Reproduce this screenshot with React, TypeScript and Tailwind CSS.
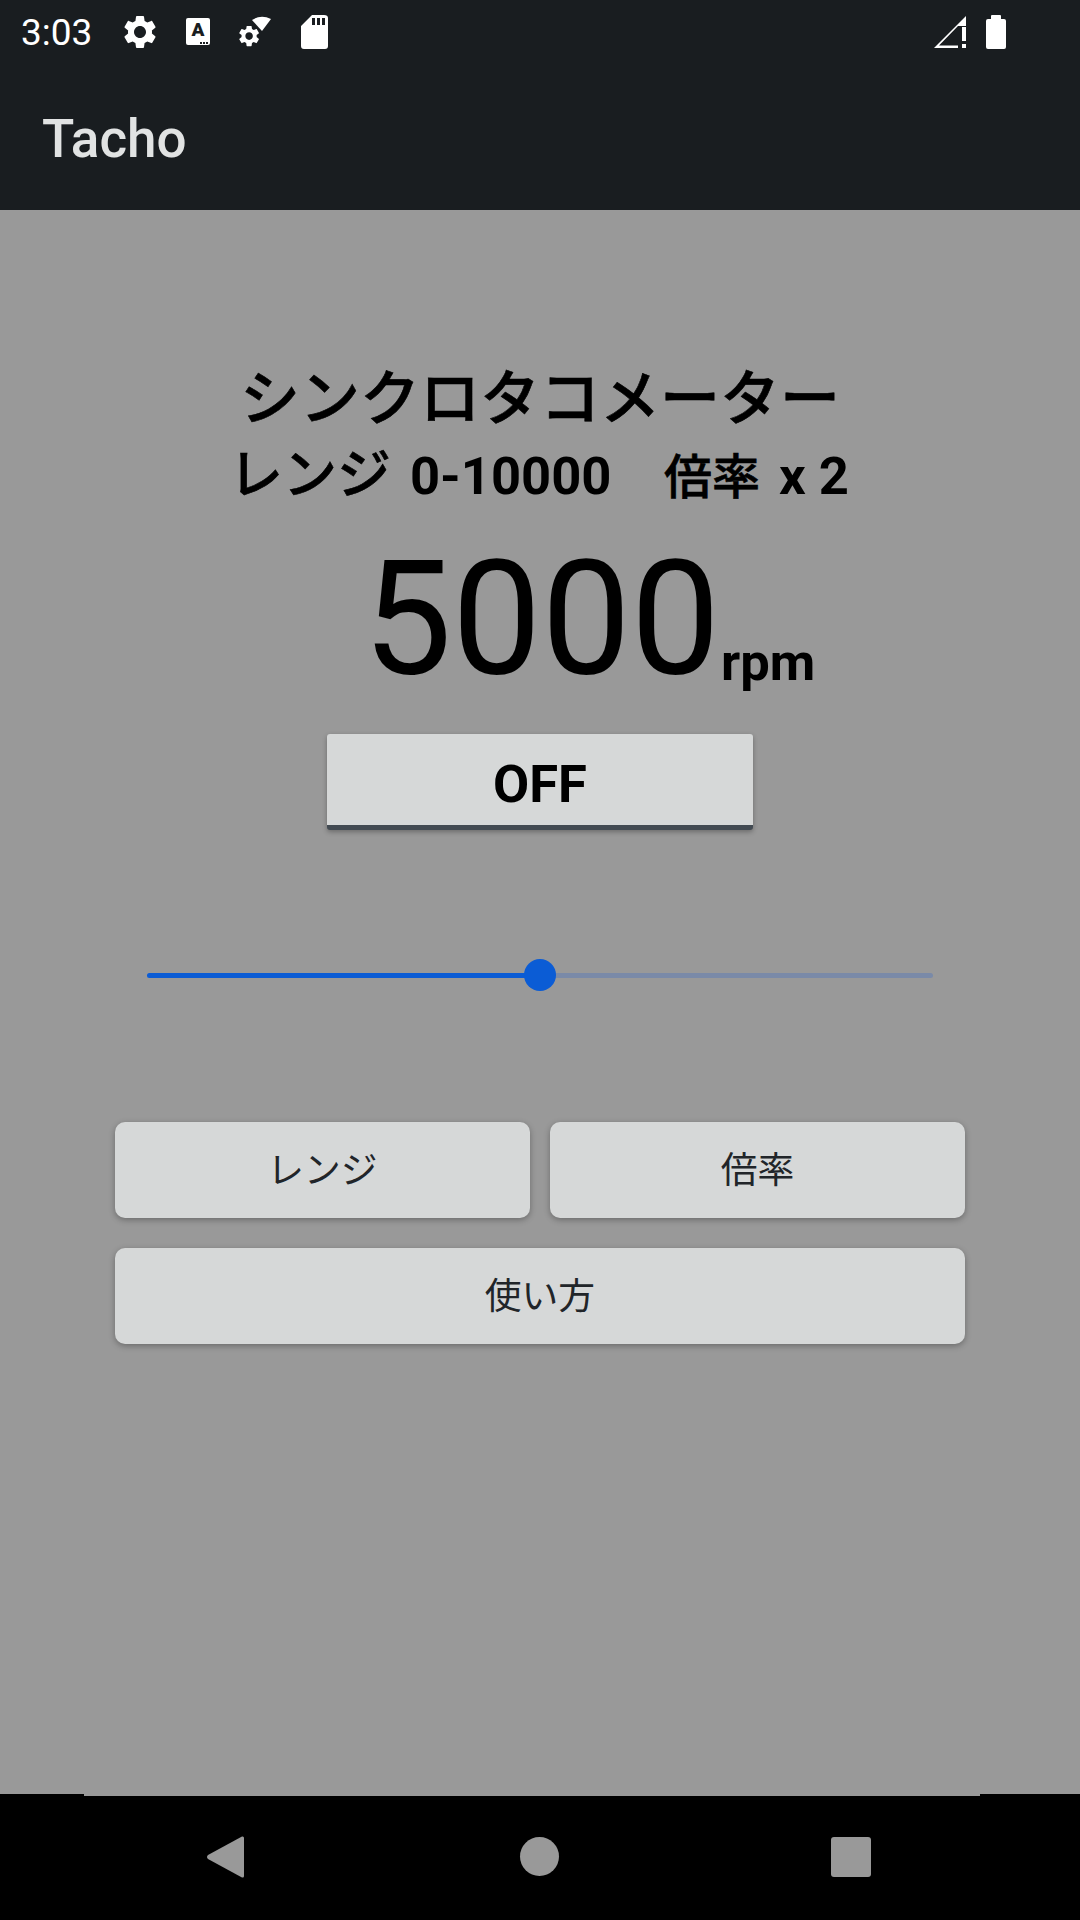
import React from "react";

const roboto = "font-['Roboto','Noto_Sans_CJK_JP',sans-serif]";

function StatusIcons() {
  return (
    <div className="flex items-center">
      <svg className="ml-[24px]" width="40" height="40" viewBox="0 0 24 24" fill="#fff">
        <path d="M19.14 12.94c.04-.3.06-.61.06-.94 0-.32-.02-.64-.07-.94l2.03-1.58c.18-.14.23-.41.12-.61l-1.92-3.32c-.12-.22-.37-.29-.59-.22l-2.39.96c-.5-.38-1.03-.7-1.62-.94l-.36-2.54c-.04-.24-.24-.41-.48-.41h-3.84c-.24 0-.43.17-.47.41l-.36 2.54c-.59.24-1.13.57-1.62.94l-2.39-.96c-.22-.08-.47 0-.59.22L2.74 8.87c-.12.21-.08.47.12.61l2.03 1.58c-.05.3-.09.63-.09.94s.02.64.07.94l-2.03 1.58c-.18.14-.23.41-.12.61l1.92 3.32c.12.22.37.29.59.22l2.39-.96c.5.38 1.03.7 1.62.94l.36 2.54c.05.24.24.41.48.41h3.84c.24 0 .44-.17.47-.41l.36-2.54c.59-.24 1.13-.56 1.62-.94l2.39.96c.22.08.47 0 .59-.22l1.92-3.32c.12-.22.07-.47-.12-.61l-2.01-1.58zM12 15.6c-1.98 0-3.6-1.62-3.6-3.6s1.62-3.6 3.6-3.6 3.6 1.62 3.6 3.6-1.62 3.6-3.6 3.6z" />
      </svg>
      <div className="relative ml-[26px] flex h-[27px] w-[24px] items-start justify-center rounded-[2px] bg-white">
        <span className="font-['Roboto',sans-serif] text-[19px] leading-[23px] font-black text-[#191d20]">A</span>
        <span className="absolute right-[2px] bottom-[1px] flex gap-[1px]">
          <i className="h-[2px] w-[2px] bg-[#191d20]" />
          <i className="h-[2px] w-[2px] bg-[#191d20]" />
          <i className="h-[2px] w-[2px] bg-[#191d20]" />
        </span>
      </div>
      <svg className="ml-[28px]" width="36" height="34" viewBox="0 0 36 34">
        <path d="M14 5 Q23 -1 33 4 L24 16 Z" fill="#fff" />
        <path
          transform="translate(-1.5 8.5) scale(1.05)"
          fill="#fff"
          d="M19.14 12.94c.04-.3.06-.61.06-.94 0-.32-.02-.64-.07-.94l2.03-1.58c.18-.14.23-.41.12-.61l-1.92-3.32c-.12-.22-.37-.29-.59-.22l-2.39.96c-.5-.38-1.03-.7-1.62-.94l-.36-2.54c-.04-.24-.24-.41-.48-.41h-3.84c-.24 0-.43.17-.47.41l-.36 2.54c-.59.24-1.13.57-1.62.94l-2.39-.96c-.22-.08-.47 0-.59.22L2.74 8.87c-.12.21-.08.47.12.61l2.03 1.58c-.05.3-.09.63-.09.94s.02.64.07.94l-2.03 1.58c-.18.14-.23.41-.12.61l1.92 3.32c.12.22.37.29.59.22l2.39-.96c.5.38 1.03.7 1.62.94l.36 2.54c.05.24.24.41.48.41h3.84c.24 0 .44-.17.47-.41l.36-2.54c.59-.24 1.13-.56 1.62-.94l2.39.96c.22.08.47 0 .59-.22l1.92-3.32c.12-.22.07-.47-.12-.61l-2.01-1.58zM12 15.6c-1.98 0-3.6-1.62-3.6-3.6s1.62-3.6 3.6-3.6 3.6 1.62 3.6 3.6-1.62 3.6-3.6 3.6z"
        />
      </svg>
      <svg className="ml-[27px]" width="27" height="34" viewBox="0 0 27 34">
        <path
          fillRule="evenodd"
          fill="#fff"
          d="M11 0 H23 Q27 0 27 3 V31 Q27 34 24 34 H3 Q0 34 0 31 V11 Z M11 3 V10 H14 V3 Z M16 3 V10 H19 V3 Z M21 3 V10 H24 V3 Z"
        />
      </svg>
    </div>
  );
}

function RightIcons() {
  return (
    <div className="flex items-center">
      <svg width="33" height="34" viewBox="0 0 33 34">
        <path fillRule="evenodd" fill="#fff" d="M0 33 L32 1 V11 H24 L5 30.5 H24 V33 Z" />
        <path fill="#fff" d="M28 12 H32 V26 H28 Z M28 29 H32 V33 H28 Z" />
      </svg>
      <div className="ml-[19px] flex flex-col items-center">
        <div className="h-[4px] w-[10px] rounded-t-[1px] bg-white" />
        <div className="h-[30px] w-[20px] rounded-[2px] bg-white" />
      </div>
    </div>
  );
}

function RaisedButton({ label, className }: { label: string; className: string }) {
  return (
    <button
      className={`flex h-[96px] items-center justify-center rounded-[10px] bg-[#d6d8d8] pt-[1px] text-[36.75px] text-[#212529] shadow-[0_2px_6px_rgba(0,0,0,0.3)] ${className}`}
    >
      {label}
    </button>
  );
}

export default function App() {
  return (
    <div className={`flex h-[1920px] w-[1080px] flex-col overflow-hidden bg-[#999999] ${roboto}`}>
      <header className="h-[210px] bg-[#191d20]">
        <div className="flex h-[63px] items-center pr-[74px] pl-[21px]">
          <span className="w-[75px] pt-[2px] text-[37px] leading-none text-white">3:03</span>
          <StatusIcons />
          <div className="flex-1" />
          <RightIcons />
        </div>
        <div className="flex h-[147px] items-center pt-[5px] pl-[42px]">
          <span className="text-[53px] leading-none font-medium text-[#e1e3e3]">Tacho</span>
        </div>
      </header>

      <main className="flex flex-1 flex-col items-center pt-[152px]">
        <h1 className="text-[60px] leading-[76px] font-medium text-black [-webkit-text-stroke:0.6px_#000]">シンクロタコメーター</h1>
        <p className="flex h-[74px] w-[622px] items-baseline pt-[2px] whitespace-nowrap text-black">
          <span className="w-[181px] shrink-0 text-[54px] leading-[72px] font-medium [-webkit-text-stroke:0.6px_#000]">レンジ</span>
          <span className="w-[254px] shrink-0 text-[52.5px] leading-[72px] font-bold">0-10000</span>
          <span className="w-[115px] shrink-0 text-[48px] leading-[72px] font-medium [-webkit-text-stroke:0.6px_#000]">倍率</span>
          <span className="shrink-0 text-[52.5px] leading-[72px] font-bold">x 2</span>
        </p>
        <div className="mt-[12px] flex items-baseline pl-[98px] text-black">
          <span className="text-[159px] leading-[190px]">5000</span>
          <span className="ml-[1px] translate-y-[7px] text-[52.5px] leading-none font-bold">rpm</span>
        </div>
        <button className="mt-[20px] flex h-[96px] w-[426px] items-center justify-center rounded-[3px] border-b-[5px] border-[#424a52] bg-[#d6d8d8] pt-[9px] text-[52.5px] font-bold text-black shadow-[0_2px_5px_rgba(0,0,0,0.3)]">
          OFF
        </button>

        <div className="relative mt-[129px] h-[32px] w-[786px]">
          <div className="absolute top-[13.5px] left-0 h-[5px] w-full rounded-full bg-[#7a8aa8]" />
          <div className="absolute top-[13.5px] left-0 h-[5px] w-1/2 rounded-l-full bg-[#0b5cd5]" />
          <div className="absolute top-0 left-[377px] h-[32px] w-[32px] rounded-full bg-[#0b5cd5]" />
        </div>

        <div className="mt-[131px] flex w-[850px] flex-wrap gap-x-[20px] gap-y-[30px]">
          <RaisedButton label="レンジ" className="w-[415px]" />
          <RaisedButton label="倍率" className="w-[415px]" />
          <RaisedButton label="使い方" className="w-full" />
        </div>
      </main>

      <nav className="h-[126px] bg-black">
        <div className="mr-[100px] ml-[84px] h-[2px] bg-[#999999]" />
        <div className="relative h-[124px]">
          <svg className="absolute top-[40px] left-[207px]" width="37" height="42" viewBox="0 0 37 42" fill="#999999">
            <path d="M35 0.5 Q37 0 37 2 V40 Q37 42 35 41.5 L1 23 Q-1 21 1 19 Z" />
          </svg>
          <div className="absolute top-[41px] left-[520px] h-[39px] w-[39px] rounded-full bg-[#999999]" />
          <div className="absolute top-[41px] left-[831px] h-[40px] w-[40px] rounded-[3px] bg-[#999999]" />
        </div>
      </nav>
    </div>
  );
}
